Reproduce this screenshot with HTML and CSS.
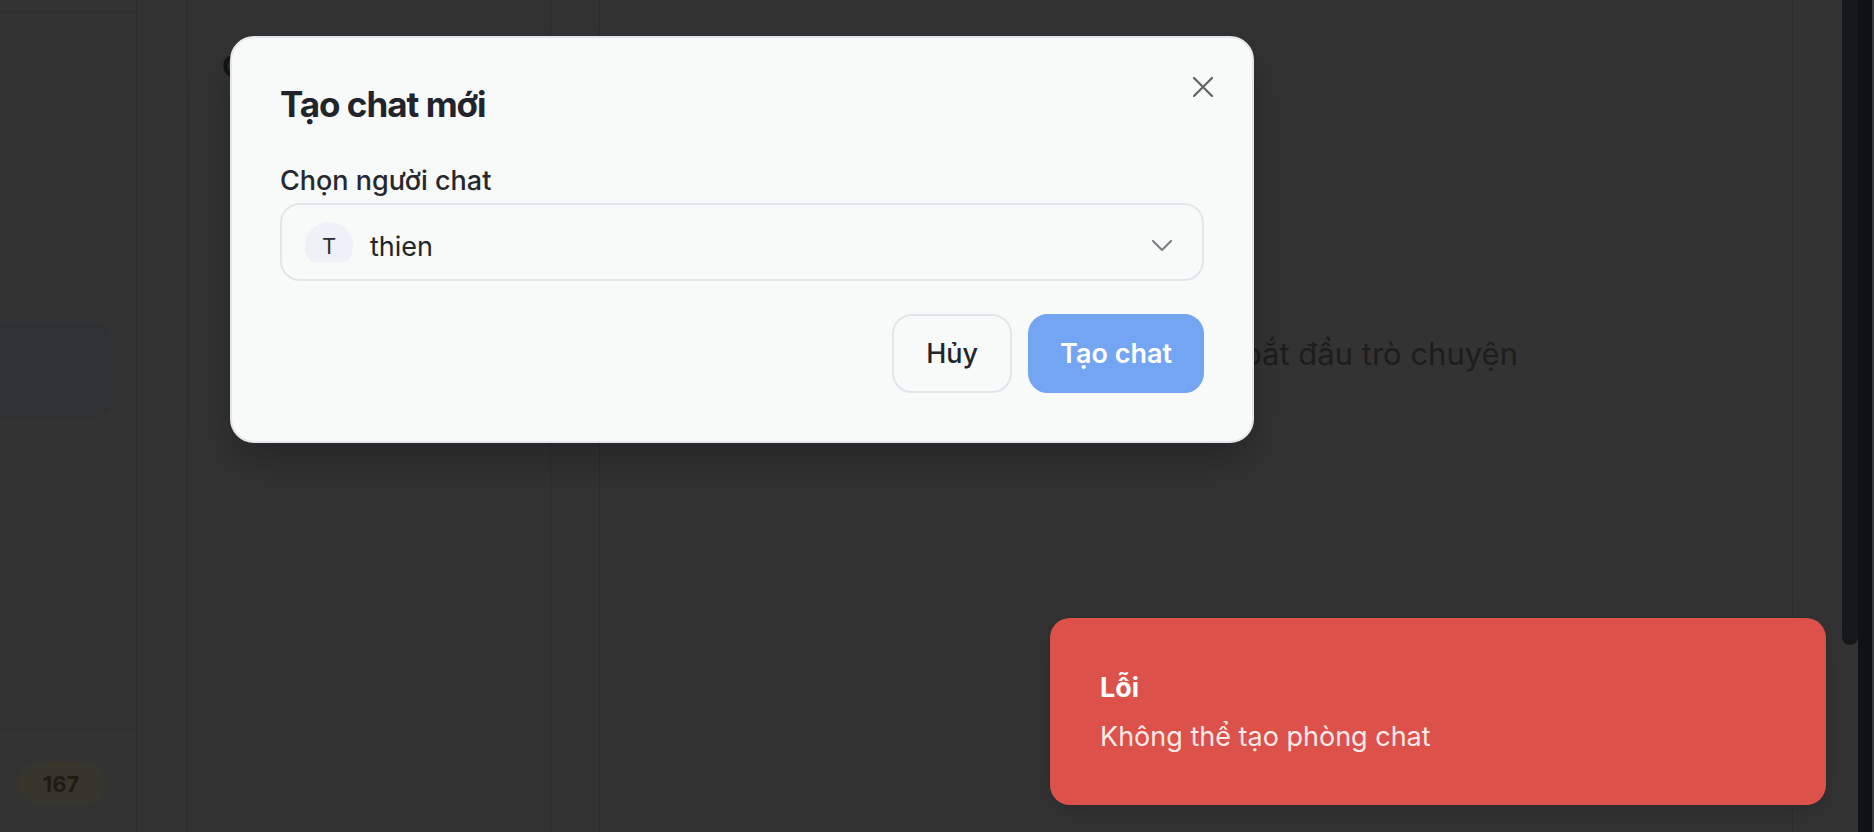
FILE: index.html
```html
<!DOCTYPE html>
<html lang="vi">
<head>
<meta charset="utf-8">
<title>Tạo chat mới</title>
<link rel="stylesheet" href="styles.css">
</head>
<body>
<div class="app">
  <aside class="sidebar">
    <div class="sidebar-top"></div>
    <div class="sidebar-nav">
      <div class="nav-item-active"></div>
    </div>
    <div class="sidebar-bottom">
      <span class="badge">167</span>
    </div>
  </aside>
  <div class="rail"></div>
  <section class="list">
    <h1 class="list-title">Chats</h1>
  </section>
  <div class="rail rail-2"></div>
  <main class="chat">
    <p class="chat-empty">để bắt đầu trò chuyện</p>
  </main>
  <div class="right-pad"></div>
  <div class="scroll-thumb-col"><div class="scroll-thumb"></div></div>
  <div class="scroll-track"></div>
</div>

<div class="modal" role="dialog">
  <button class="modal-close" aria-label="Đóng">
    <svg width="20" height="20" viewBox="0 0 20 20" fill="none" stroke="#5f6166" stroke-width="2.2" stroke-linecap="round"><path d="M1 1 L19 19 M19 1 L1 19"/></svg>
  </button>
  <h2 class="modal-title">Tạo chat mới</h2>
  <label class="field-label">Chọn người chat</label>
  <div class="select">
    <div class="avatar-wrap"><div class="avatar">T</div></div>
    <span class="select-value">thien</span>
    <svg class="chevron" width="20" height="11" viewBox="0 0 20 11" fill="none" stroke="#7b7d82" stroke-width="2" stroke-linecap="round" stroke-linejoin="round"><path d="M1 1 L10 10 L19 1"/></svg>
  </div>
  <div class="actions">
    <button class="btn btn-cancel">Hủy</button>
    <button class="btn btn-primary">Tạo chat</button>
  </div>
</div>

<div class="toast">
  <div class="toast-title">Lỗi</div>
  <div class="toast-body">Không thể tạo phòng chat</div>
</div>
</body>
</html>
```

FILE: styles.css
```css
* { box-sizing: border-box; }
html, body { margin: 0; padding: 0; }
body {
  width: 1874px;
  height: 832px;
  overflow: hidden;
  background: #333333;
  font-family: Inter, "Noto Sans", "Liberation Sans", sans-serif;
  position: relative;
}
.app {
  display: flex;
  height: 832px;
}
.sidebar {
  width: 137px;
  border-right: 1px solid #2c2c2c;
  display: flex;
  flex-direction: column;
}
.sidebar-top {
  height: 12px;
  border-bottom: 1px solid #2f2f2f;
}
.sidebar-nav {
  flex: 1;
  padding-top: 310px;
}
.nav-item-active {
  width: 112px;
  height: 96px;
  background: #303133;
  border-radius: 0 18px 18px 0;
}
.sidebar-bottom {
  height: 103px;
  border-top: 1px solid #2e2e2e;
  padding: 32px 0 0 18px;
}
.badge {
  display: inline-flex;
  align-items: center;
  justify-content: center;
  width: 86px;
  height: 43px;
  border-radius: 22px;
  background: #37362d;
  color: #221b12;
  font-weight: 700;
  font-size: 22px;
}
.rail {
  width: 51px;
  border-right: 1px solid #2c2c2c;
}
.rail-2 { width: 49px; }
.list {
  width: 363px;
  border-right: 1px solid #2c2c2c;
  padding: 46px 0 0 34px;
}
.list-title {
  margin: 0;
  font-size: 30px;
  line-height: 40px;
  font-weight: 700;
  color: #151515;
}
.chat {
  width: 1193px;
  border-right: 1px solid #2e2e2e;
  display: flex;
  justify-content: flex-end;
  padding: 334px 274px 0 0;
}
.chat-empty {
  margin: 0;
  font-size: 31px;
  line-height: 40px;
  color: #1d1d1d;
}
.right-pad { width: 49px; }
.scroll-thumb-col { width: 16px; background: #333333; }
.scroll-thumb {
  height: 645px;
  background: #17181b;
  border-radius: 0 0 8px 8px;
}
.scroll-track {
  width: 16px;
  background: #101116;
  border-right: 2px solid #3a3b3f;
}

/* Modal */
.modal {
  position: absolute;
  left: 230px;
  top: 36px;
  width: 1024px;
  background: #f8f9f9;
  border: 2px solid #e3e6ea;
  border-radius: 24px;
  padding: 48px;
  box-shadow: 0 20px 40px rgba(0,0,0,0.25);
}
.modal-close {
  position: absolute;
  top: 38px;
  right: 38px;
  width: 22px;
  height: 22px;
  padding: 1px;
  border: 0;
  background: none;
  display: flex;
}
.modal-title {
  margin: 0 0 41px;
  font-size: 35px;
  line-height: 36px;
  font-weight: 700;
  letter-spacing: -1px;
  color: #22242b;
}
.field-label {
  display: block;
  font-size: 27px;
  line-height: 36px;
  font-weight: 500;
  color: #26282e;
  margin-bottom: 4px;
}
.select {
  display: flex;
  align-items: center;
  height: 78px;
  border: 2px solid #e2e6ea;
  border-radius: 20px;
  padding: 0 30px 0 23px;
}
.avatar-wrap {
  width: 48px;
  height: 40px;
  overflow: hidden;
  flex: none;
}
.avatar {
  width: 48px;
  height: 48px;
  border-radius: 50%;
  background: #eef1f7;
  display: flex;
  align-items: center;
  justify-content: center;
  font-size: 22px;
  color: #2b2d33;
}
.select-value {
  flex: 1;
  margin-left: 17px;
  padding-top: 9px;
  font-size: 27px;
  line-height: 36px;
  color: #23252b;
}
.chevron { flex: none; margin-top: 6px; }
.actions {
  display: flex;
  justify-content: flex-end;
  gap: 16px;
  margin-top: 33px;
}
.btn {
  height: 79px;
  padding: 0 32px;
  border-radius: 20px;
  font-family: inherit;
  font-size: 27px;
  font-weight: 500;
  line-height: 36px;
}
.btn-cancel {
  background: #f8f9f9;
  border: 2px solid #e2e6ea;
  color: #23252b;
}
.btn-primary {
  padding: 0 30px;
  background: #74a5f2;
  border: 2px solid #74a5f2;
  color: #ffffff;
  font-weight: 600;
}

/* Toast */
.toast {
  position: absolute;
  left: 1050px;
  top: 618px;
  width: 776px;
  height: 187px;
  border-radius: 20px;
  background: #dc524b;
  padding: 52px 50px 0;
  box-shadow: 0 8px 24px rgba(0,0,0,0.15);
}
.toast-title {
  font-size: 27px;
  line-height: 36px;
  font-weight: 700;
  color: #ffffff;
}
.toast-body {
  margin-top: 13px;
  font-size: 27px;
  line-height: 36px;
  color: rgba(255,255,255,0.9);
}
```
